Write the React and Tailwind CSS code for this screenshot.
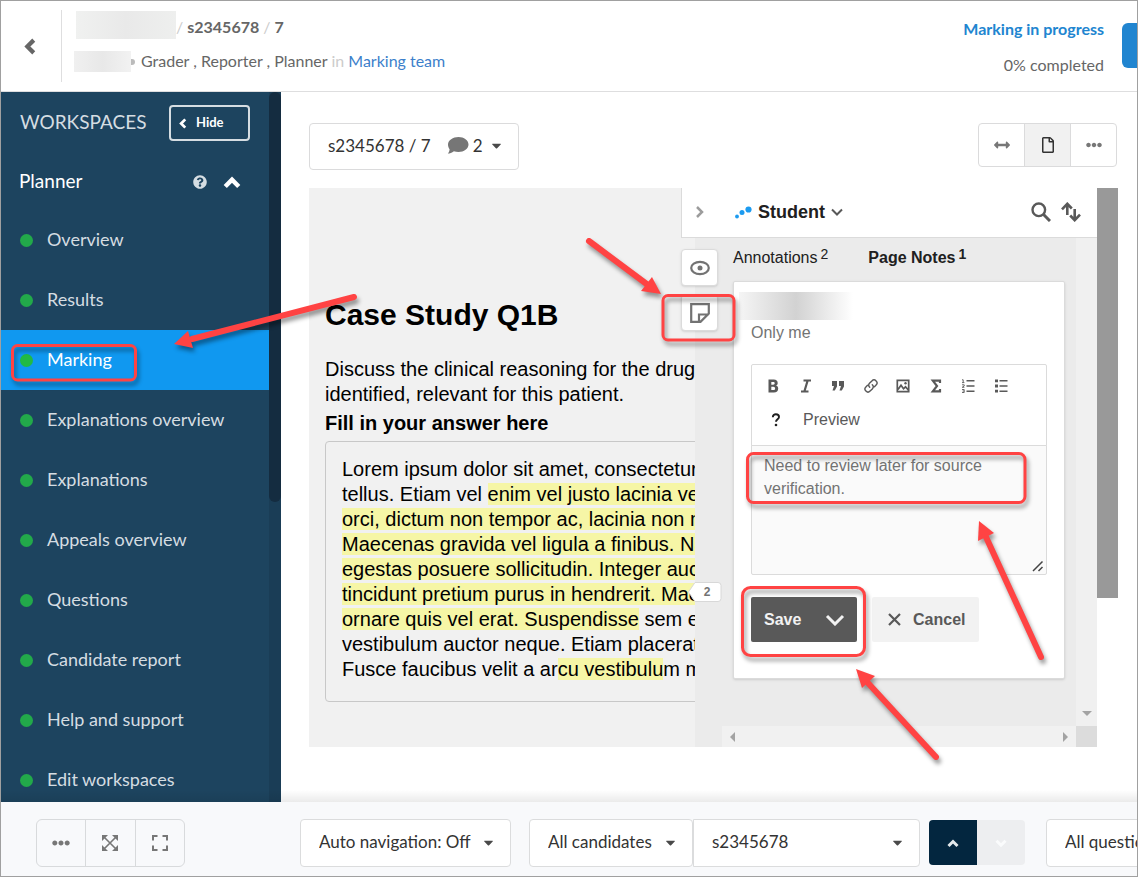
import { useState } from 'react';
import {
  FaArrowsAltH,
  FaCaretDown,
  FaEllipsisH,
  FaQuestionCircle,
  FaRegFile
} from 'react-icons/fa';

const workspaces = [
  'Overview',
  'Results',
  'Marking',
  'Explanations overview',
  'Explanations',
  'Appeals overview',
  'Questions',
  'Candidate report',
  'Help and support',
  'Edit workspaces'
];

const formatTools = [
  {
    label: 'Bold',
    icon: <path d="M3.500 1.500h5.300c2.500 0 3.900 1.300 3.900 3.400 0 1.300-.7 2.200-1.700 2.700 1.400.4 2.200 1.500 2.200 3 0 2.500-1.600 3.900-4.300 3.900H3.500v-13zm2.800 2.400v2.800h1.800c1.100 0 1.600-.5 1.600-1.400s-.5-1.400-1.600-1.400H6.300zm0 4.900v3.300h2c1.200 0 1.800-.6 1.800-1.600s-.6-1.700-1.800-1.700h-2z" fill="currentColor" fillRule="evenodd" />
  },
  {
    label: 'Italic',
    icon: <path d="M5.500 2.500H13M3 13.500h7.500M9.500 3L6.500 13" fill="none" stroke="currentColor" strokeWidth="2.200" />
  },
  {
    label: 'Quote',
    icon: <path d="M2 3h5v5.500L4.800 12.500H2.500L4 8H2V3zm7 0h5v5.500l-2.200 4H9.500L11 8H9V3z" fill="currentColor" />
  },
  {
    label: 'Insert link',
    icon: <path d="M6.700 9.300a3 3 0 0 1 0-4.200l2.200-2.200a2.900 2.900 0 0 1 4.200 4.200l-1.600 1.600M9.300 6.700a3 3 0 0 1 0 4.200l-2.200 2.200a2.900 2.900 0 0 1-4.200-4.200l1.600-1.600" fill="none" stroke="currentColor" strokeWidth="1.400" strokeLinecap="round" />
  },
  {
    label: 'Insert image',
    icon: (
      <>
        <path d="M2.300 2.300h11.400v11.400H2.300zM3 11.500l3-4.200 2.500 3.500 2-2 3 3.500" fill="none" stroke="currentColor" strokeWidth="1.700" />
        <circle cx="10.500" cy="5.300" r="1.200" fill="currentColor" />
      </>
    )
  },
  {
    label: 'Insert math',
    icon: <path d="M12 5V2.600H4.800L9 8l-4.200 5.400H12V11" fill="none" stroke="currentColor" strokeWidth="2.200" />
  },
  {
    label: 'Numbered list',
    icon: (
      <>
        <path d="M6.500 2.800H14.500M6.500 8H14.500M6.500 13.200H14.500" stroke="currentColor" strokeWidth="1.500" />
        <path d="M2 1.800h1.200v2.600M2 4.600h2.400M2 6.800h2.200v1.200L2.200 9.300h2.200M2 11.500h2.200v3H2M2.600 13h1.500" fill="none" stroke="currentColor" strokeWidth=".9" />
      </>
    )
  },
  {
    label: 'Bulleted list',
    icon: (
      <>
        <path d="M6.500 2.800H14.500M6.500 8H14.500M6.500 13.200H14.500" stroke="currentColor" strokeWidth="1.500" />
        <path d="M2 2.800h3M2 8h3M2 13.200h3" stroke="currentColor" strokeWidth="2.800" />
      </>
    )
  }
];

const chevrons = {
  left: 'M12 2L6 8l6 6',
  up: 'M2 12l6-6 6 6',
  down: 'M2 5l6 6 6-6'
};

const Chevron = ({ to, className }) => (
  <svg viewBox="0 0 16 16" className={className} fill="none" stroke="currentColor" strokeWidth="4">
    <path d={chevrons[to]} />
  </svg>
);

const Picker = ({ label, value, className }) => (
  <div className={`relative h-12 shrink-0 ${className}`}>
    <select
      aria-label={label}
      className="h-full w-full appearance-none overflow-hidden border border-[#dbdcdd] bg-white pb-0.5 pl-[18px] text-[17px] text-[#333] [border-radius:inherit]"
    >
      <option>{value}</option>
    </select>
    <FaCaretDown size={15} className="pointer-events-none absolute right-[15px] top-4 text-[#4a4a4a]" />
  </div>
);

const Header = () => (
  <header className="flex h-[91px] shrink-0 items-center overflow-hidden border-b border-[#dededf] bg-white">
    <button aria-label="Back" className="flex h-[72px] w-[61px] shrink-0 items-center justify-center border-r border-[#dededf] text-[#666]">
      <Chevron to="left" className="mr-1 size-[17px]" />
    </button>
    <div className="flex flex-col gap-3 self-start pl-3 pt-2.5 text-base text-[#666]">
      <div className="flex h-7 items-center">
        <span className="ml-0.5 h-7 w-[100px] bg-gradient-to-r from-[#f0f1f0] via-[#e9e9e9] to-[#eeefee]" />
        <span className="flex gap-1 pt-1">
          <span className="text-[#ccc]">/</span>
          <b>s2345678</b>
          <span className="text-[#ccc]">/</span>
          <b>7</b>
        </span>
      </div>
      <div className="flex h-[21px] items-center">
        <span className="h-[21px] w-[57px] bg-gradient-to-r from-[#f0f0f0] via-[#e8e8e8] to-[#f2f2f2]" />
        <span className="mr-1.5 h-1.5 w-1 rounded-r-full bg-[#bbb]" />
        <span className="pb-0.5">
          Grader , Reporter , Planner <span className="text-[#ccc]">in</span>{' '}
          <a href="#team" className="text-[#3c7fcb]">Marking team</a>
        </span>
      </div>
    </div>
    <div className="ml-auto flex items-center gap-[18px]">
      <div className="flex flex-col gap-3 pt-0.5 text-right text-base text-[#666]">
        <a href="#progress" className="font-bold text-[#2185d0]">Marking in progress</a>
        <span>0% completed</span>
      </div>
      <button aria-label="Next step" className="-mr-[33px] mb-0.5 h-[45px] w-12 rounded-md bg-[#2185d0]" />
    </div>
  </header>
);

const Sidebar = ({ active, onSelect }) => (
  <nav className="flex w-[280px] shrink-0 bg-[#1d445f] text-[#d5dde2]">
    <div className="min-w-0 flex-1 overflow-hidden">
      <div className="flex h-[62px] items-center justify-between px-[19px]">
        <span className="pb-0.5 text-[19px]">WORKSPACES</span>
        <button className="flex h-9 w-[81px] items-center gap-2 rounded border-2 border-[#d5dde2] pl-1.5 text-[13px] font-bold text-white">
          <Chevron to="left" className="size-[11px]" />
          Hide
        </button>
      </div>
      <div className="flex h-14 items-center pl-[18px] pr-7 text-white">
        <span className="pb-0.5 text-[19px]">Planner</span>
        <FaQuestionCircle size={14} className="ml-auto text-[#d5dde2]" />
        <button aria-label="Collapse planner" className="ml-4">
          <Chevron to="up" className="size-[18px]" />
        </button>
      </div>
      <ul>
        {workspaces.map((name) => (
          <li key={name}>
            <a
              href="#workspace"
              onClick={() => onSelect(name)}
              className={`flex h-[60px] items-center gap-[14px] pl-[19px] text-lg ${name === active ? 'bg-[#1098f0] text-white' : ''}`}
            >
              <span className={`size-[13px] rounded-full ${name === active ? 'bg-[#21ba45]' : 'bg-[#22a94a]'}`} />
              <span className="pb-0.5">{name}</span>
            </a>
          </li>
        ))}
      </ul>
    </div>
    <div className="w-3 bg-[#1a3d56]">
      <div className="h-[410px] rounded-full bg-[#142c40]" />
    </div>
  </nav>
);

const Mark = ({ children }) => <mark className="bg-[#f6f6a6] text-inherit">{children}</mark>;

const Document = () => (
  <article className="min-w-0 flex-1 overflow-hidden whitespace-nowrap bg-[#f1f1f1] pl-4 pt-[109px] text-xl leading-[25px] text-black">
    <h1 className="text-3xl font-bold">Case Study Q1B</h1>
    <p className="mt-6">
      Discuss the clinical reasoning for the drug
      <br />
      identified, relevant for this patient.
    </p>
    <h2 className="mt-1 font-bold">Fill in your answer here</h2>
    <p className="mt-[5px] w-[720px] rounded border border-[#c8c8c8] px-4 pb-[19px] pt-[15px]">
      Lorem ipsum dolor sit amet, consectetur
      <br />
      tellus. Etiam vel <Mark>enim vel justo lacinia vel</Mark>
      <br />
      <Mark>orci, dictum non tempor ac, lacinia non ni</Mark>
      <br />
      <Mark>Maecenas gravida vel ligula a finibus. Na</Mark>
      <br />
      <Mark>egestas posuere sollicitudin. Integer auct</Mark>
      <br />
      <Mark>tincidunt pretium purus in hendrerit. Mae</Mark>
      <br />
      <Mark>ornare quis vel erat. Suspendisse</Mark> sem et
      <br />
      vestibulum auctor neque. Etiam placerat
      <br />
      Fusce faucibus velit a ar<Mark>cu vestibulu</Mark>m mi
    </p>
  </article>
);

const NoteCard = () => (
  <section className="ml-[38px] mr-[11px] mt-[43px] h-[398px] rounded-xs border border-[#dbdbdb] bg-white px-[17px] shadow-sm">
    <div className="-ml-3 mt-2.5 h-7 w-[114px] bg-gradient-to-r from-[#f5f5f5] via-[#d2d2d2] to-white" />
    <p className="mt-px leading-6 text-[#737373]">Only me</p>
    <div className="mt-[19px] rounded-t-xs border border-[#dbdbdb] pb-2 pt-1">
      <div className="grid grid-cols-8 pl-[5px] pr-[29px]">
        {formatTools.map((tool) => (
          <button key={tool.label} aria-label={tool.label} className="flex h-[34px] items-center justify-center text-[#595959]">
            <svg viewBox="0 0 16 16" className="size-4">{tool.icon}</svg>
          </button>
        ))}
      </div>
      <div className="flex h-[34px] items-center">
        <button aria-label="Formatting help" className="flex w-12 justify-center">
          <svg viewBox="0 0 16 16" className="size-4 text-[#202020]">
            <path d="M4.800 5.300c0-2 1.300-3 3.100-3s3.100 1 3.100 2.700c0 2.300-3 2.300-3 4.800" fill="none" stroke="currentColor" strokeWidth="1.900" />
            <circle cx="8" cy="13" r="1.300" fill="currentColor" />
          </svg>
        </button>
        <button className="ml-[3px] text-[#595959]">Preview</button>
      </div>
    </div>
    <div className="relative -mt-px">
      <textarea
        aria-label="Page note"
        defaultValue="Need to review later for source verification."
        className="block h-[130px] w-full resize-none rounded-b-xs border border-[#dbdbdb] bg-[#fafafa] px-3 py-2 leading-[23px] text-[#737373]"
      />
      <svg viewBox="0 0 12 12" className="pointer-events-none absolute bottom-[3px] right-[3px] size-3">
        <path d="M1 11L10.500 1.500M6.500 11l4-4" stroke="#444" strokeWidth="1.500" />
      </svg>
    </div>
    <div className="mt-[22px] flex h-[45px] gap-[15px] font-bold">
      <div className="flex w-[106px] rounded-xs bg-[#595959] text-[#f2f2f2]">
        <button className="flex-1 pl-[13px] text-left">Save</button>
        <button aria-label="Save options" className="pr-3">
          <svg viewBox="0 0 20 12" className="w-5">
            <path d="M2 2l8 8 8-8" fill="none" stroke="currentColor" strokeWidth="3" />
          </svg>
        </button>
      </div>
      <button className="flex w-[107px] items-center gap-3 rounded-xs bg-[#f2f2f2] pl-4 text-[#595959]">
        <svg viewBox="0 0 13 13" className="size-[13px]">
          <path d="M1 1l11 11M12 1L1 12" stroke="currentColor" strokeWidth="2.200" />
        </svg>
        Cancel
      </button>
    </div>
  </section>
);

const Annotator = () => (
  <aside className="relative flex w-[402px] shrink-0 flex-col bg-[#ebebeb] text-base">
    <div className="-ml-[14px] flex h-[50px] items-center border-b border-l border-[#dbdbdb] bg-white pb-0.5 pr-4">
      <button aria-label="Close panel" className="flex h-full w-9 items-center justify-center text-[#9c9c9c]">
        <svg viewBox="0 0 10 14" className="h-3.5 w-2.5">
          <path d="M2 2l5 5-5 5" fill="none" stroke="currentColor" strokeWidth="2.500" />
        </svg>
      </button>
      <button className="ml-4 flex items-center gap-1.5 text-lg font-bold text-[#202020]">
        <svg viewBox="0 0 18 14" className="h-3.5 w-[18px] text-[#1c9bf0]" fill="currentColor">
          <circle cx="3" cy="11.500" r="1.900" />
          <circle cx="8" cy="7.500" r="2.500" />
          <circle cx="14.500" cy="4.500" r="3.100" />
        </svg>
        Student
        <svg viewBox="0 0 12 8" className="w-3 text-[#595959]">
          <path d="M1 1.500l5 5 5-5" fill="none" stroke="currentColor" strokeWidth="2" />
        </svg>
      </button>
      <div className="ml-auto flex items-center gap-2.5 text-[#595959]">
        <button aria-label="Search">
          <svg viewBox="0 0 20 20" className="size-5" fill="none" stroke="currentColor" strokeWidth="2.400">
            <circle cx="7.800" cy="7.800" r="6.300" />
            <path d="M12.300 12.300l6.700 6.700" strokeWidth="3" />
          </svg>
        </button>
        <button aria-label="Sort">
          <svg viewBox="0 0 20 20" className="size-5" fill="none" stroke="currentColor" strokeWidth="2.600">
            <path d="M6.300 13V2M1 7.300l5.300-5.500 4.500 4.700M13.700 7v11M19 12.700l-5.300 5.500L9.200 13.500" />
          </svg>
        </button>
      </div>
    </div>

    <div className="flex min-h-0 flex-1">
      <div className="relative flex min-w-0 flex-1 flex-col">
        <div role="tablist" className="absolute left-[38px] top-2 flex gap-10 text-[#202020]">
          <button role="tab" aria-selected="false" className="flex">
            Annotations<span className="-mt-0.5 ml-[3px] text-sm">2</span>
          </button>
          <button role="tab" aria-selected="true" className="flex font-bold">
            Page Notes<span className="-mt-0.5 ml-[3px] text-sm">1</span>
          </button>
        </div>
        <NoteCard />
        <div className="ml-[27px] mt-auto flex h-[21px] items-center justify-between bg-[#f1f1f1] px-2 text-[#a3a3a3]">
          <svg viewBox="0 0 5 10" className="h-2.5 w-[5px]"><path d="M5 0v10L0 5z" fill="currentColor" /></svg>
          <svg viewBox="0 0 5 10" className="h-2.5 w-[5px]"><path d="M0 0v10l5-5z" fill="currentColor" /></svg>
        </div>
      </div>
      <div className="flex w-[21px] flex-col items-center bg-[#f0f0f0] text-[#a3a3a3]">
        <svg viewBox="0 0 10 5" className="mb-2.5 mt-auto h-[5px] w-2.5"><path d="M0 0h10L5 5z" fill="currentColor" /></svg>
        <div className="h-[21px] w-full bg-[#dcdcdc]" />
      </div>
    </div>

    {/* Floating controls on the panel edge */}
    <div className="absolute -left-[14px] top-[61px] flex flex-col gap-2 text-[#737373]">
      <button aria-label="Show highlights" className="flex size-[37px] items-center justify-center rounded border border-[#dbdbdb] bg-white shadow-sm">
        <svg viewBox="0 0 20 16" className="h-4 w-5">
          <ellipse cx="10" cy="8" rx="8.800" ry="6.200" fill="none" stroke="currentColor" strokeWidth="2.200" />
          <circle cx="10" cy="8" r="2.500" fill="currentColor" />
        </svg>
      </button>
      <button aria-label="New page note" className="flex size-[37px] items-center justify-center rounded border border-[#dbdbdb] bg-white shadow-sm">
        <svg viewBox="0 0 20 20" className="size-5" fill="none" stroke="currentColor" strokeWidth="2.200">
          <path d="M1.200 1.200h17.600v9.300l-8.300 8.300H1.200zM9 19v-7.500h9.800" />
        </svg>
      </button>
    </div>
    <button aria-label="2 annotations" className="absolute -left-[7px] top-[394px] h-5 w-[34px] text-xs font-bold text-[#737373]">
      <svg viewBox="0 0 34 20" className="absolute inset-0">
        <path d="M7 .5h23a3 3 0 0 1 3 3v13a3 3 0 0 1-3 3H7L.5 10z" fill="#fff" stroke="#d8d8d8" />
      </svg>
      <span className="relative ml-1">2</span>
    </button>
  </aside>
);

const Footer = () => (
  <footer className="relative flex h-[74px] shrink-0 items-start overflow-hidden bg-[#f8f9fb] pt-[17px]">
    <div className="w-[299px] shrink-0 pl-[35px]">
      <div className="flex h-12 w-[149px] divide-x divide-[#d8dadc] rounded-md border border-[#d8dadc] text-[#777]">
        <button aria-label="More" className="flex flex-1 items-center justify-center"><FaEllipsisH size={18} /></button>
        <button aria-label="Fit to window" className="flex flex-1 items-center justify-center">
          <svg viewBox="0 0 16 16" className="size-4">
            <path d="M2.500 2.500l11 11M13.500 2.500l-11 11" stroke="currentColor" strokeWidth="1.600" />
            <path d="M0 0h6L0 6zM16 0v6l-6-6zM0 16v-6l6 6zM16 16h-6l6-6z" fill="currentColor" />
          </svg>
        </button>
        <button aria-label="Full screen" className="flex flex-1 items-center justify-center">
          <svg viewBox="0 0 16 16" className="size-4" fill="none" stroke="currentColor" strokeWidth="2">
            <path d="M1 5.500V1h4.500M10.500 1H15v4.500M15 10.500V15h-4.500M5.500 15H1v-4.500" />
          </svg>
        </button>
      </div>
    </div>
    <Picker label="Auto navigation" value="Auto navigation: Off" className="mr-[18px] w-[211px] rounded" />
    <Picker label="Candidates" value="All candidates" className="w-[164px] rounded" />
    <Picker label="Candidate" value="s2345678" className="w-[227px] rounded-r" />
    <div className="ml-[9px] mr-[21px] mt-px flex h-[45px] shrink-0 overflow-hidden rounded">
      <button aria-label="Previous candidate" className="flex w-12 items-center justify-center bg-[#03263f] text-[#e3e8eb]">
        <Chevron to="up" className="size-3" />
      </button>
      <button aria-label="Next candidate" className="flex w-12 items-center justify-center bg-[#edeef0] text-[#fafbfc]">
        <Chevron to="down" className="size-3" />
      </button>
    </div>
    <Picker label="Questions" value="All questions" className="w-[164px] rounded" />
  </footer>
);

// Red callouts that sit above the whole screen
const Callouts = () => (
  <svg
    width="1138"
    height="877"
    viewBox="0 0 1138 877"
    fill="none"
    stroke="#ff4343"
    strokeWidth="3"
    className="pointer-events-none absolute -left-px -top-px max-w-none [filter:drop-shadow(2px_4px_2px_rgba(0,0,0,0.4))]"
  >
    <rect x="12.500" y="345.500" width="123" height="34.500" rx="5" />
    <rect x="663" y="295.500" width="71" height="44.500" rx="5" />
    <rect x="747.500" y="453.500" width="277.500" height="49" rx="6" />
    <rect x="742.500" y="587.500" width="122" height="68" rx="8" />
    <g strokeWidth="6" strokeLinecap="round">
      <path d="M354 297L192 339" />
      <path d="M589 241l59 44" />
      <path d="M1041 657l-55-120" />
      <path d="M936 757l-68-74" />
    </g>
    <g fill="#ff4343" stroke="none">
      <path d="M174 344l14-13 5 17z" />
      <path d="M661 294l-9-17-11 14z" />
      <path d="M979 521l-1 20 16-8z" />
      <path d="M856 669l6 19 13-12z" />
    </g>
  </svg>
);

const App = () => {
  const [active, setActive] = useState('Marking');

  return (
    <div className="relative flex h-screen flex-col overflow-hidden border border-[#a0a0a0] bg-white font-[Lato,sans-serif]">
      <Header />
      <div className="flex min-h-0 flex-1">
        <Sidebar active={active} onSelect={setActive} />
        <main className="min-w-0 flex-1 overflow-hidden pl-7 pr-[19px] pt-[31px]">
          <div className="flex h-[47px] items-start justify-between pr-px">
            <button aria-haspopup="listbox" className="flex h-[47px] w-[210px] items-center rounded border border-[#dbdbdc] pb-0.5 pl-[18px] text-[17px] text-[#333]">
              s2345678 / 7
              <svg viewBox="0 0 22 17" className="ml-4 h-[17px] w-[22px] text-[#767676]">
                <path d="M11.500 0C17 0 21.500 3.200 21.500 7.500S17 15 11.500 15c-1.700 0-3.200-.3-4.600-.8C5 16 2.700 16.500.8 16.500c1-.9 1.700-2.200 1.800-4.200C1.600 11 1 9.300 1 7.500 1 3.200 6 0 11.500 0z" fill="currentColor" />
              </svg>
              <span className="ml-1">2</span>
              <FaCaretDown size={15} className="ml-1.5 text-[#4a4a4a]" />
            </button>
            <div className="flex h-11 w-[139px] divide-x divide-[#dbdbdc] overflow-hidden rounded border border-[#dbdbdc] text-[#777]">
              <button aria-label="Fit width" className="flex flex-1 items-center justify-center"><FaArrowsAltH size={16} /></button>
              <button aria-label="Fit page" className="flex flex-1 items-center justify-center bg-[#f1f1f1] text-[#333]"><FaRegFile size={16} /></button>
              <button aria-label="More options" className="flex flex-1 items-center justify-center"><FaEllipsisH size={16} /></button>
            </div>
          </div>
          <div className="mt-[18px] flex h-[559px] font-['Liberation_Sans',Arial,sans-serif]">
            <Document />
            <Annotator />
            <div className="w-[21px] shrink-0">
              <div className="h-[410px] bg-[#999]" />
            </div>
          </div>
        </main>
      </div>
      <div className="relative">
        <div className="pointer-events-none absolute inset-x-0 bottom-full h-3 bg-gradient-to-t from-black/8 to-transparent" />
      </div>
      <Footer />
      <Callouts />
    </div>
  );
};

export default App;
